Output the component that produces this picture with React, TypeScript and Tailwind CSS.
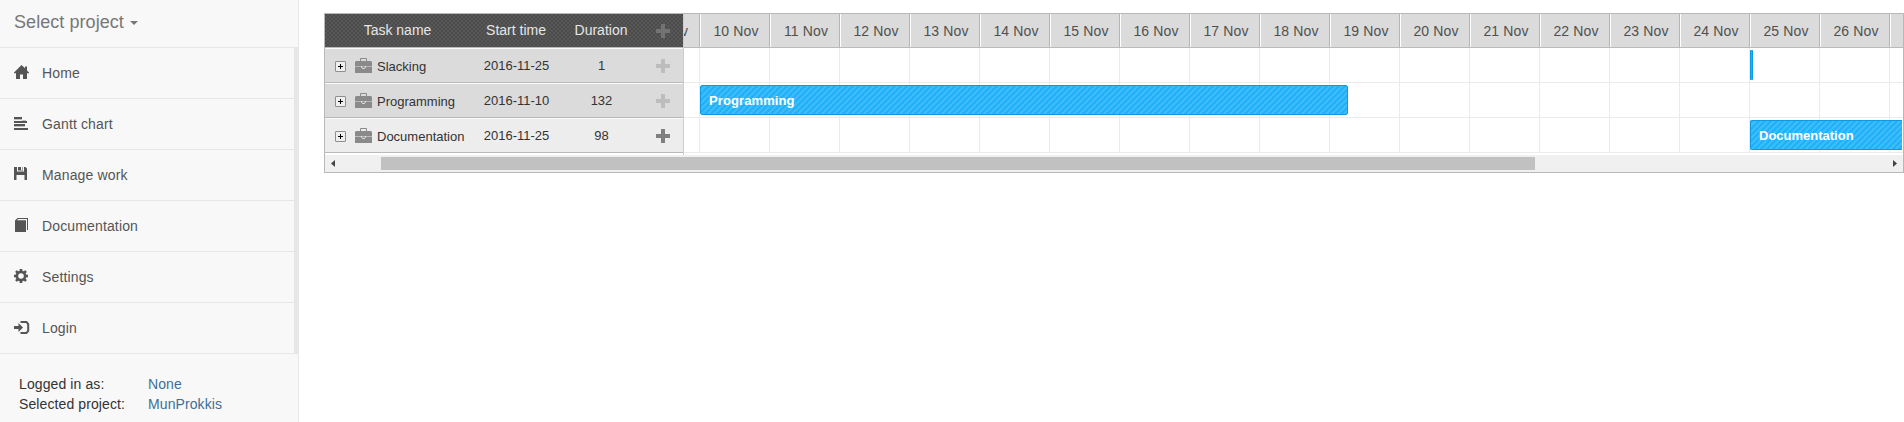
import React from "react";

const iconPaths: Record<string, React.ReactNode> = {
  home: <path d="M7.500 0 11 3.300V1.500h2v4L15 7.500V8.200H13V14H9V9.500H6V14H2V8.200H0V7.500z" />,
  gantt: (
    <>
      <path d="M0 1h8v2H0zM0 5h13v2H0zM0 8h11v2H0zM0 12h14v2H0z" />
      <path d="M8 4h4v1H8zM0 3h8v1H0zM0 10h11v1H0z" opacity=".35" />
    </>
  ),
  save: <path d="M0 0h3v4.500h7V0h1.500L13 1.500V13h-2.500V8h-8v5H0zM4 0h3v3H4zM8.500 0H9v3.500H4V3h4.500z" />,
  book: <path d="M1 2.500 3.500 0H14v12h-1V1H4L3 2.200h9V14H1z" />,
  gear: (
    <path
      fillRule="evenodd"
      d="M5.800 0h2.400l.4 1.900 1 .4L11.300 1.200 12.800 2.700 11.700 4.400 12.100 5.400 14 5.800V8.200L12.100 8.600 11.700 9.600 12.800 11.300 11.300 12.800 9.600 11.700 8.600 12.100 8.200 14H5.800L5.400 12.100 4.400 11.700 2.700 12.800 1.200 11.300 2.300 9.600 1.900 8.600 0 8.200V5.800L1.900 5.400 2.300 4.400 1.200 2.700 2.700 1.200 4.400 2.300 5.400 1.900zM7 4.200a2.800 2.800 0 1 0 0 5.600 2.800 2.800 0 0 0 0-5.600z"
    />
  ),
  login: (
    <>
      <path d="M0 6h4.500V3L9 7.500 4.500 12V9H0z" />
      <path d="M6.500 2h6L14.200 4v7l-1.700 2h-6" fill="none" stroke="#555" strokeWidth="2" />
    </>
  ),
};

const menu = [
  { icon: "home", label: "Home" },
  { icon: "gantt", label: "Gantt chart" },
  { icon: "save", label: "Manage work" },
  { icon: "book", label: "Documentation" },
  { icon: "gear", label: "Settings" },
  { icon: "login", label: "Login" },
];

const tasks = [
  { name: "Slacking", start: "2016-11-25", duration: "1", bg: "bg-[#dbdbdb]", plus: "text-[#bdbdbd]" },
  { name: "Programming", start: "2016-11-10", duration: "132", bg: "bg-[#dbdbdb]", plus: "text-[#bdbdbd]" },
  { name: "Documentation", start: "2016-11-25", duration: "98", bg: "bg-[#ededed]", plus: "text-[#7f7f7f]" },
];

const days = Array.from({ length: 17 }, (_, i) => `${i + 10} Nov`);

function Plus({ className }: { className: string }) {
  return (
    <svg width="14" height="14" viewBox="0 0 14 14" className={className} fill="currentColor">
      <path d="M5 0h4v5h5v4H9v5H5V9H0V5h5z" />
    </svg>
  );
}

function Briefcase() {
  return (
    <svg width="17" height="15" viewBox="0 0 17 15" className="block" fill="#8a8a8a">
      <path d="M5.500 3V.5h6V3" fill="none" stroke="#8a8a8a" />
      <path d="M1 3h15l1 1v4H0V4z" />
      <path d="M0 8.500h17V15H0z" />
      <path d="M6.500 8v1l1 1.500h2l1-1.500V8" fill="none" stroke="#e4e4e4" />
    </svg>
  );
}

function Sidebar() {
  return (
    <aside className="flex h-[422px] w-[299px] shrink-0 flex-col border-r border-[#e7e7e7] bg-[#f8f8f8] text-sm leading-5">
      <div className="flex h-[47px] shrink-0 items-center pb-[3px] pl-[14px] text-lg tracking-[0.06px] text-[#777]">
        Select project
        <span className="ml-[6px] mt-[2px] border-x-4 border-t-4 border-x-transparent border-t-[#777]" />
      </div>
      <nav className="-mr-px h-[307px] shrink-0 border-r-[5px] border-t border-[#e7e7e7] tracking-[0.14px]">
        {menu.map((m) => (
          <div key={m.label} className="flex h-[51px] items-center border-b border-[#e7e7e7] pl-[14px] text-[#555]">
            <svg width="16" height="14" viewBox="0 0 16 14" fill="#555" className="mr-[12px] mb-[2px]">
              {iconPaths[m.icon]}
            </svg>
            {m.label}
          </div>
        ))}
      </nav>
      <div className="grid grid-cols-[129px_1fr] pl-[19px] pt-5 tracking-[0.1px] text-[#333]">
        <span>Logged in as:</span>
        <span className="text-[#3d6f98]">None</span>
        <span>Selected project:</span>
        <span className="text-[#3d6f98]">MunProkkis</span>
      </div>
    </aside>
  );
}

const stripes =
  "border border-[#0a9be3] rounded-[2px] bg-[repeating-linear-gradient(135deg,#22b1f9_0px,#22b1f9_2.121px,#3dbcfb_2.121px,#3dbcfb_4.243px)]";

function TaskGrid() {
  return (
    <div className="w-[358px] shrink-0">
      <div className="grid h-[33px] grid-cols-[146px_90px_80px_42px] items-center bg-[#4d4d4d] bg-[repeating-conic-gradient(#575757_0_25%,#4c4c4c_0_50%)] bg-[length:4px_4px] pb-px text-center text-sm text-[#e6e6e6]">
        <span className="pr-px">Task name</span>
        <span>Start time</span>
        <span>Duration</span>
        <span className="flex justify-center pl-[2px] pt-[2px]"><Plus className="text-[#737373]" /></span>
      </div>
      <div className="h-px bg-[#bababa]" />
      {tasks.map((t) => (
        <div
          key={t.name}
          className={`${t.bg} grid h-[35px] grid-cols-[146px_90px_80px_42px] items-center border-t border-b border-t-[#fafafa] border-b-[#bababa] text-center text-[13px] text-[#333]`}
        >
          <span className="flex items-center pl-[10px] pt-px">
            <span className="flex size-[11px] items-center justify-center rounded-[1px] border border-[#8e8e8e] bg-[#efefef]">
              <svg width="5" height="5" viewBox="0 0 5 5"><path d="M2 0h1v2h2v1H3v2H2V3H0V2h2z" /></svg>
            </span>
            <span className="ml-[9px] -mt-[2px]"><Briefcase /></span>
            <span className="ml-[5px] pt-px">{t.name}</span>
          </span>
          <span className="pl-px pt-px">{t.start}</span>
          <span className="pl-px pt-px">{t.duration}</span>
          <span className="flex justify-center pl-[2px] pt-px"><Plus className={t.plus} /></span>
        </div>
      ))}
    </div>
  );
}

function Timeline() {
  return (
    <div className="relative min-w-0 flex-1 overflow-hidden border-l border-[#cecece]">
      <div className="flex h-[34px] border-b border-[#bababa] bg-[#dbdbdb] text-sm tracking-[0.12px] text-[#505050]">
        <div className="flex w-4 shrink-0 items-center justify-end border-r border-[#b5b5b5] pr-[11px]">v</div>
        {days.map((d) => (
          <div key={d} className="flex w-[70px] shrink-0 items-center justify-center border-l border-r border-l-white border-r-[#b5b5b5] pl-[2px]">
            {d}
          </div>
        ))}
        <div className="w-[70px] shrink-0 border-l border-white" />
      </div>
      {tasks.map((t) => (
        <div key={t.name} className="flex h-[35px] border-b border-[#ebebeb]">
          <div className="w-4 shrink-0 border-r border-[#ebebeb]" />
          {days.map((d) => (
            <div key={d} className="w-[70px] shrink-0 border-r border-[#ebebeb]" />
          ))}
        </div>
      ))}
      <div className="absolute left-[1066px] top-[36px] h-[30px] w-[3px] rounded-[1px] border-x border-[#0a9be3] bg-[#22b1f9]" />
      <div className={`${stripes} absolute left-[16px] top-[71px] flex h-[30px] w-[648px] items-center pl-2 pt-px text-[13px] font-bold tracking-[0.1px] text-white`}>
        Programming
      </div>
      <div className={`${stripes} absolute left-[1066px] right-px top-[106px] flex h-[30px] items-center rounded-r-none border-r-0 pl-2 pt-px text-[13px] font-bold text-white`}>
        Documentation
      </div>
    </div>
  );
}

export default function App() {
  return (
    <div className="flex h-[422px] w-[1904px] overflow-hidden bg-white font-['Liberation_Sans',Arial,sans-serif]">
      <Sidebar />
      <main className="pl-[25px] pt-[13px]">
        <div className="w-[1580px] border border-[#b8b8b8]">
          <div className="flex h-[141px]">
            <TaskGrid />
            <Timeline />
          </div>
          <div className="flex h-[17px] items-center bg-[#f0f0f0]">
            <svg width="56" height="17" fill="#444"><path d="M6 8.500 10 5v7z" /></svg>
            <div className="h-[13px] w-[1154px] bg-[#c1c1c1]" />
            <svg width="17" height="17" fill="#444" className="ml-auto"><path d="M11 8.500 7 5v7z" /></svg>
          </div>
        </div>
      </main>
    </div>
  );
}
